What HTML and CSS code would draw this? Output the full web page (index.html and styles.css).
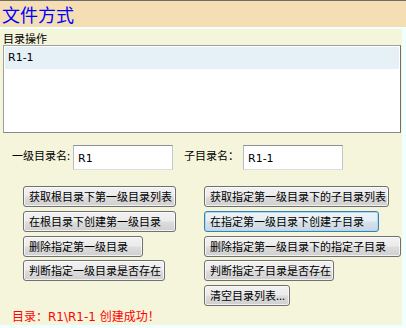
FILE: index.html
```html
<!DOCTYPE html>
<html>
<head>
<meta charset="utf-8">
<link rel="stylesheet" href="styles.css">
</head>
<body>
<div class="frame">
  <div class="header">文件方式</div>
  <div class="panel">
    <div class="caption">目录操作</div>
    <div class="listbox">
      <div class="item selected">R1-1</div>
    </div>
    <div class="fields">
      <span class="label label-first">一级目录名:</span>
      <div class="textbox">R1</div>
      <span class="label label-second">子目录名：</span>
      <div class="textbox">R1-1</div>
    </div>
    <div class="buttons">
      <button class="btn w-l1">获取根目录下第一级目录列表</button>
      <button class="btn w-r1">获取指定第一级目录下的子目录列表</button>
      <button class="btn w-l2">在根目录下创建第一级目录</button>
      <button class="btn focus w-r2">在指定第一级目录下创建子目录</button>
      <button class="btn w-l3">删除指定第一级目录</button>
      <button class="btn w-r3">删除指定第一级目录下的指定子目录</button>
      <button class="btn w-l4">判断指定一级目录是否存在</button>
      <button class="btn w-r4">判断指定子目录是否存在</button>
      <span></span>
      <button class="btn w-r5">清空目录列表...</button>
    </div>
    <div class="status">目录：R1\R1-1 创建成功！</div>
  </div>
</div>
</body>
</html>
```
FILE: styles.css
```css
html, body {
  margin: 0;
  padding: 0;
}
body {
  width: 406px;
  height: 328px;
  overflow: hidden;
  background: #F0FFFF;
  font-family: "DejaVu Sans", "Noto Sans CJK SC", sans-serif;
  font-size: 11px;
  color: #000;
}
.frame {
  border-top: 1px solid #6b6b6b;
}
.header {
  height: 26px;
  background: #F5DEB3;
  color: #0000FF;
  font-family: "Noto Sans CJK SC", sans-serif;
  font-size: 18px;
  line-height: 26px;
  padding-left: 2px;
}
.panel {
  margin-top: 2px;
  width: 402px;
  height: 296px;
  background: #F5F5DC;
  display: flex;
  flex-direction: column;
}
.caption {
  font-family: "Noto Sans CJK SC", sans-serif;
  margin: 2px 0 0 3px;
  height: 14px;
  line-height: 14px;
}
.listbox {
  box-sizing: border-box;
  margin: 0 0 0 3px;
  width: 398px;
  height: 89px;
  background: #fff;
  border: 1px solid #a0a0a0;
  border-right-color: #6e6e6e;
  border-bottom-color: #8a8a8a;
  padding: 1px;
}
.item {
  height: 22px;
  line-height: 22px;
  padding-left: 3px;
}
.selected {
  background: #E5F0F7;
}
.fields {
  display: flex;
  align-items: flex-start;
  margin-top: 12px;
  height: 25px;
}
.label {
  font-family: "Noto Sans CJK SC", sans-serif;
  padding-top: 3px;
  line-height: 14px;
  white-space: nowrap;
}
.label-first {
  margin-left: 12px;
  width: 61px;
}
.label-second {
  margin-left: 11px;
  width: 59px;
}
.textbox {
  box-sizing: border-box;
  width: 100px;
  height: 25px;
  background: #fff;
  border: 1px solid #7A8A99;
  border-color: #8e8f8f #c5c7c9 #dcdee0 #b8babd;
  padding-left: 4px;
  line-height: 24px;
  padding-top: 1px;
}
.buttons {
  display: grid;
  grid-template-columns: 181px auto;
  grid-auto-rows: 21px;
  row-gap: 3.75px;
  justify-items: start;
  margin: 16px 0 0 23px;
}
.btn {
  box-sizing: border-box;
  height: 21px;
  margin: 0;
  padding: 0 0 0 5px;
  text-align: left;
  font-family: "Noto Sans CJK SC", sans-serif;
  font-size: 11px;
  line-height: 19px;
  color: #000;
  white-space: nowrap;
  border: 1px solid #707070;
  border-radius: 3px;
  background: linear-gradient(#F2F2F2 0%, #EBEBEB 48%, #DDDDDD 52%, #CFCFCF 100%);
  box-shadow: inset 0 0 0 1px rgba(255, 255, 255, 0.7);
}
.focus {
  border-color: #3C7FB1;
  box-shadow: inset 0 0 0 1px #A9DCF4;
  background: linear-gradient(#EEF4F8 0%, #E6EEF3 48%, #D6E2EA 52%, #C9D7E1 100%);
}
.w-l1 { width: 153px; }
.w-l2 { width: 153px; }
.w-l3 { width: 120px; }
.w-l4 { width: 142px; }
.w-r1 { width: 185px; }
.w-r2 { width: 175px; }
.w-r3 { width: 197px; }
.w-r4 { width: 130px; }
.w-r5 { width: 86px; }
.status {
  margin: 3px 0 0 12px;
  color: #FF0000;
  font-family: "DejaVu Sans", "Noto Sans CJK SC", sans-serif;
  font-size: 12px;
  line-height: 16px;
}
```
